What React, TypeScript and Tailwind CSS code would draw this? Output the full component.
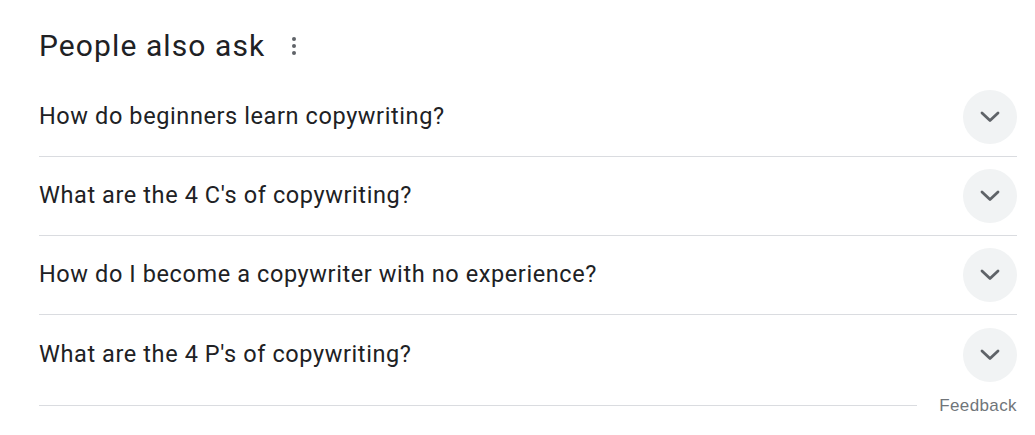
const questions = [
  'How do beginners learn copywriting?',
  "What are the 4 C's of copywriting?",
  'How do I become a copywriter with no experience?',
  "What are the 4 P's of copywriting?",
]

function Chevron() {
  return (
    <svg width="20" height="12" viewBox="0 0 20 12" fill="none">
      <path d="M2 2 L10 9.5 L18 2" stroke="#5f6368" strokeWidth="2.8" strokeLinecap="round" strokeLinejoin="round" />
    </svg>
  )
}

export default function App() {
  return (
    <div className="w-[1035px] h-[435px] bg-white pl-[39px] pr-[18px] font-['Roboto',sans-serif] text-[#202124]">
      <div className="flex items-center h-[91px] pt-[1px]">
        <h2 className="text-[30px] leading-none tracking-[1.1px]">People also ask</h2>
        <button className="ml-[27px] flex flex-col gap-[3px] items-center">
          <span className="w-[4px] h-[4px] rounded-full bg-[#5f6368]" />
          <span className="w-[4px] h-[4px] rounded-full bg-[#5f6368]" />
          <span className="w-[4px] h-[4px] rounded-full bg-[#5f6368]" />
        </button>
      </div>
      <div className="-mt-[13px]">
        {questions.map((q, i) => (
          <div
            key={q}
            className={`flex items-center justify-between h-[79px] ${i < questions.length - 1 ? 'border-b border-[#dadce0]' : ''}`}
          >
            <span className="text-[23.5px] leading-none tracking-[0.6px]">{q}</span>
            <span className="w-[54px] h-[54px] rounded-full bg-[#f1f3f4] flex items-center justify-center">
              <Chevron />
            </span>
          </div>
        ))}
      </div>
      <div className="flex items-center gap-[22px] -mt-[1px]">
        <div className="flex-1 border-t border-[#dadce0]" />
        <span className="text-[17px] tracking-[0.4px] text-[#70757a] font-['Liberation_Sans',sans-serif]">Feedback</span>
      </div>
    </div>
  )
}
